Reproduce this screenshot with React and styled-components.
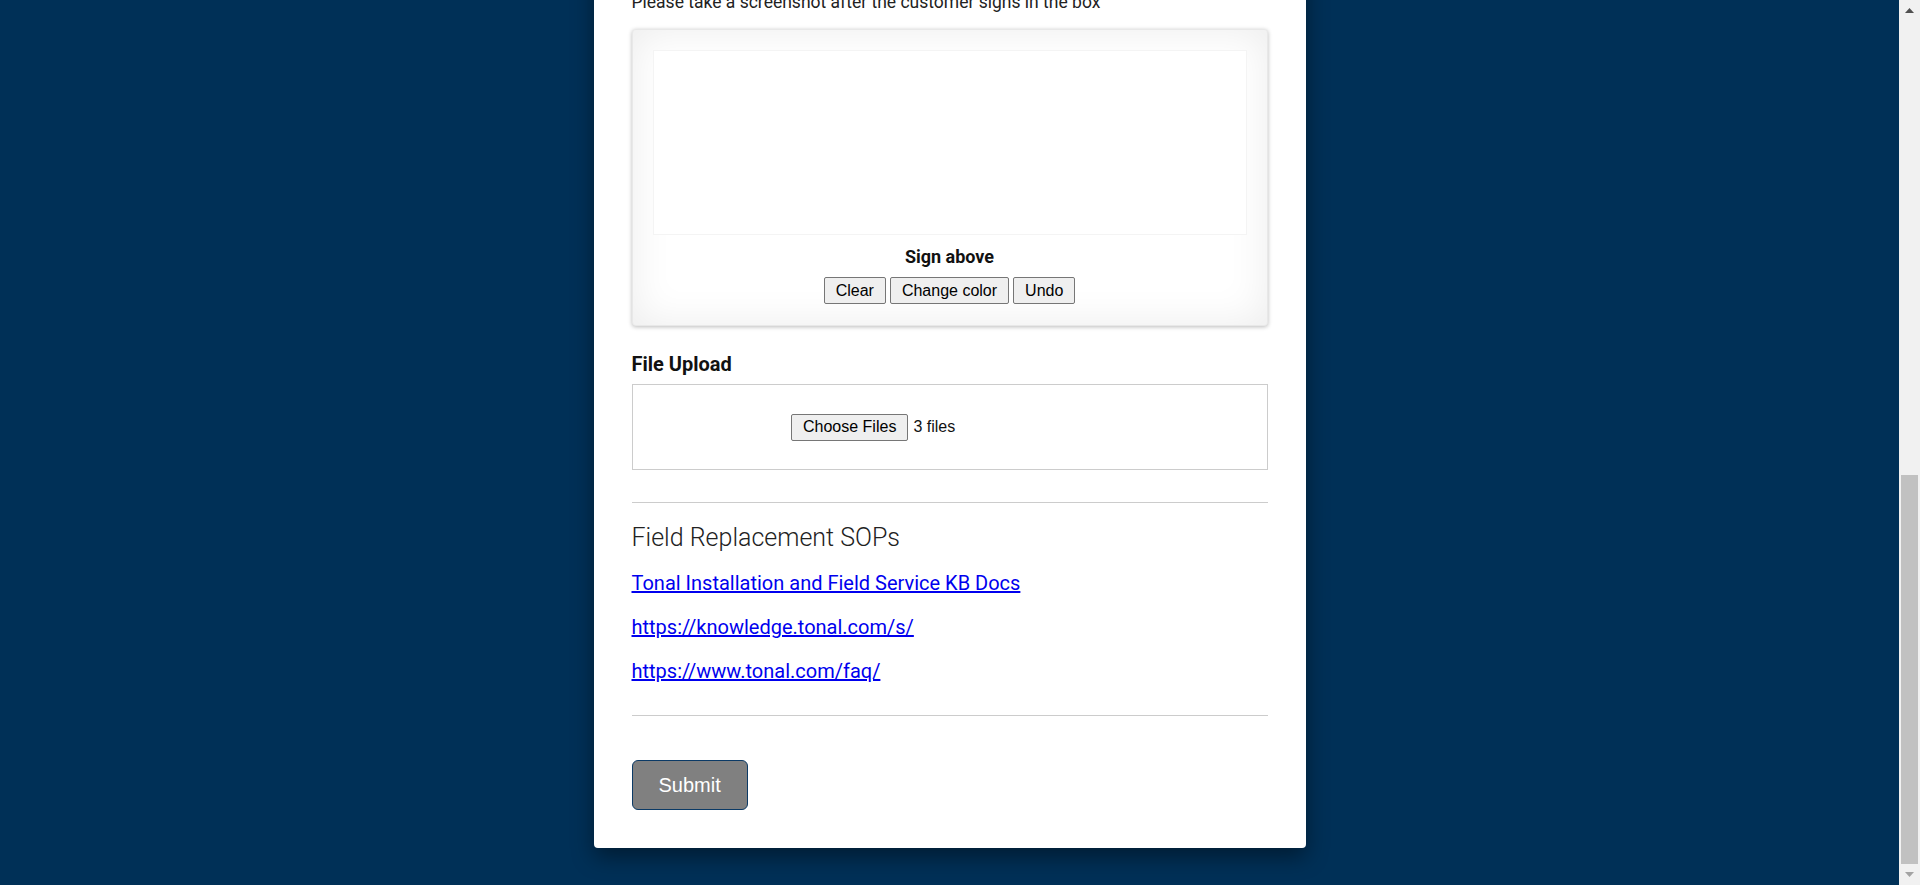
import React from 'react';
import styled, { createGlobalStyle } from 'styled-components';

const GlobalStyle = createGlobalStyle`
    html, body {
        margin: 0;
        height: 100%;
        background: #003057;
    }
    #root {
        height: 100%;
    }
    * {
        box-sizing: border-box;
    }
`;

const Page = styled.div`
    display: flex;
    height: 100vh;
    overflow: hidden;
    background: #003057;
    font-family: Roboto, "Liberation Sans", sans-serif;
`;

const Viewport = styled.main`
    flex: 1;
    min-width: 0;
    display: flex;
    flex-direction: column;
    justify-content: flex-end;
    align-items: center;
    padding-bottom: 37px;
    overflow: hidden;
`;

const Card = styled.section`
    flex-shrink: 0;
    width: 712px;
    padding: 38px;
    background: #fff;
    border-radius: 0 0 4px 4px;
    box-shadow: 0 9px 22px rgba(0, 0, 0, 0.42);
    display: flex;
    flex-direction: column;
`;

const FieldLabel = styled.label`
    display: block;
    font-size: 20px;
    line-height: 23px;
    font-weight: 700;
    color: #111;
    margin-top: ${p => p.$top || 0}px;
`;

const Hint = styled.p`
    margin: 8px 0 0;
    font-size: 17.5px;
    line-height: 19px;
    color: #222;
`;

const SignaturePad = styled.div`
    margin-top: 17px;
    height: 297px;
    padding: 20px;
    border: 1px solid #e8e8e8;
    border-radius: 4px;
    background: #fff;
    box-shadow: 0 1px 4px rgba(0, 0, 0, 0.27), 0 0 40px rgba(0, 0, 0, 0.08) inset;
    display: flex;
    flex-direction: column;
`;

const Canvas = styled.div`
    height: 185px;
    border: 1px solid #f4f4f4;
    background: #fff;
`;

const PadFooter = styled.div`
    display: flex;
    flex-direction: column;
    align-items: center;
    padding-top: 11px;
`;

const PadCaption = styled.div`
    font-size: 18px;
    line-height: 21px;
    font-weight: 700;
    color: #111;
`;

const PadActions = styled.div`
    display: flex;
    gap: 4px;
    margin-top: 10px;
`;

const NativeButton = styled.button`
    height: 27px;
    padding: 0 11px;
    font-family: "Liberation Sans", Arial, sans-serif;
    font-size: 16px;
    color: #000;
    background: #efefef;
    border: 1px solid #767676;
    border-radius: 2px;
    cursor: pointer;
`;

const UploadBox = styled.div`
    margin-top: 8px;
    height: 86px;
    border: 1px solid #ccc;
    display: flex;
    align-items: center;
`;

const FileInput = styled.div`
    width: 50%;
    margin: 0 auto;
    display: flex;
    align-items: center;
    gap: 5px;
    font-family: "Liberation Sans", Arial, sans-serif;
    font-size: 16px;
    color: #111;
`;

const Divider = styled.hr`
    margin: 32px 0 0;
    border: 0;
    height: 1px;
    background: #ccc;
`;

const SectionTitle = styled.h2`
    margin: 21px 0 0;
    font-size: 25px;
    line-height: 28px;
    font-weight: 300;
    color: #222;
`;

const Links = styled.div`
    display: flex;
    flex-direction: column;
    align-items: flex-start;
    gap: 20px;
    margin-top: 19px;
`;

const DocLink = styled.a`
    font-size: 20px;
    line-height: 24px;
    color: #0000ee;
    text-decoration: underline;
`;

const SubmitButton = styled.button`
    align-self: flex-start;
    margin-top: 44px;
    height: 50px;
    padding: 0 26px;
    font-family: "Liberation Sans", Arial, sans-serif;
    font-size: 20px;
    color: #fff;
    background: #808080;
    border: 1px solid #0b3a66;
    border-radius: 6px;
    cursor: pointer;
`;

const Scrollbar = styled.div`
    flex: 0 0 21px;
    display: flex;
    flex-direction: column;
    background: #f1f1f1;
`;

const ScrollArrow = styled.div`
    height: 21px;
    display: flex;
    align-items: center;
    justify-content: center;
    color: ${p => p.$disabled ? '#a3a3a3' : '#505050'};
`;

const ScrollTrack = styled.div`
    flex: 1;
    display: flex;
    flex-direction: column;
    justify-content: flex-end;
    padding: 0 2px;
`;

const ScrollThumb = styled.div`
    height: 389px;
    background: #c1c1c1;
`;

const links = [
    { text: 'Tonal Installation and Field Service KB Docs', href: '#kb' },
    { text: 'https://knowledge.tonal.com/s/', href: '#knowledge' },
    { text: 'https://www.tonal.com/faq/', href: '#faq' },
];

const Arrow = ({ down }) => (
    <svg width="9" height="5" viewBox="0 0 9 5">
        <polygon points={down ? '0,0 9,0 4.5,5' : '0,5 9,5 4.5,0'} fill="currentColor" />
    </svg>
);

const App = () => {
    return (
        <Page>
            <GlobalStyle />
            <Viewport>
                <Card>
                    <FieldLabel>Customer Signature</FieldLabel>
                    <Hint>Please take a screenshot after the customer signs in the box</Hint>
                    <SignaturePad>
                        <Canvas />
                        <PadFooter>
                            <PadCaption>Sign above</PadCaption>
                            <PadActions>
                                <NativeButton type="button">Clear</NativeButton>
                                <NativeButton type="button">Change color</NativeButton>
                                <NativeButton type="button">Undo</NativeButton>
                            </PadActions>
                        </PadFooter>
                    </SignaturePad>

                    <FieldLabel $top={27}>File Upload</FieldLabel>
                    <UploadBox>
                        <FileInput>
                            <NativeButton type="button">Choose Files</NativeButton>
                            <span>3 files</span>
                        </FileInput>
                    </UploadBox>

                    <Divider />
                    <SectionTitle>Field Replacement SOPs</SectionTitle>
                    <Links>
                        {links.map(l => (
                            <DocLink key={l.href} href={l.href}>{l.text}</DocLink>
                        ))}
                    </Links>
                    <Divider />

                    <SubmitButton type="submit">Submit</SubmitButton>
                </Card>
            </Viewport>
            <Scrollbar>
                <ScrollArrow><Arrow /></ScrollArrow>
                <ScrollTrack>
                    <ScrollThumb />
                </ScrollTrack>
                <ScrollArrow $disabled><Arrow down /></ScrollArrow>
            </Scrollbar>
        </Page>
    );
};

export default App;
